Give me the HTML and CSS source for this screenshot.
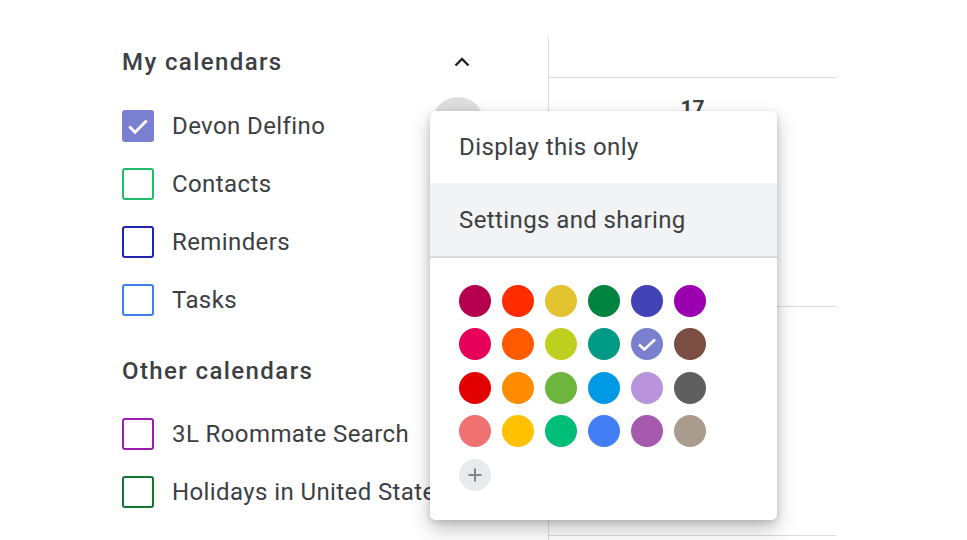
FILE: index.html
```html
<!DOCTYPE html>
<html lang="en">
<head>
<meta charset="utf-8">
<title>Calendar list</title>
<link rel="stylesheet" href="styles.css">
</head>
<body>
<div class="page">
  <aside class="sidebar">
    <section class="group">
      <div class="group-head">
        <h2 class="group-title">My calendars</h2>
        <svg class="chevron" width="24" height="24" viewBox="0 0 24 24"><path d="M5.5 15.5 L12 9 L18.5 15.5" fill="none" stroke="#202124" stroke-width="2.4"/></svg>
      </div>
      <ul class="cal-list">
        <li class="cal"><span class="box box-lavender"><svg width="26" height="26" viewBox="0 0 24 24"><path d="M4 12.5 L9.3 17.8 L20 7" fill="none" stroke="#fff" stroke-width="2.6"/></svg></span>Devon Delfino</li>
        <li class="cal"><span class="box box-sage"></span>Contacts</li>
        <li class="cal"><span class="box box-blueberry"></span>Reminders</li>
        <li class="cal"><span class="box box-cobalt"></span>Tasks</li>
      </ul>
    </section>
    <section class="group group-other">
      <div class="group-head">
        <h2 class="group-title">Other calendars</h2>
      </div>
      <ul class="cal-list cal-list-other">
        <li class="cal"><span class="box box-grape"></span>3L Roommate Search</li>
        <li class="cal"><span class="box box-basil"></span>Holidays in United States</li>
      </ul>
    </section>
  </aside>

  <main class="calendar">
    <div class="cal-top"></div>
    <div class="week"><div class="daynum">17</div></div>
    <div class="week"></div>
  </main>

  <div class="rest"></div>

  <div class="hover-dot"></div>

  <div class="menu">
    <div class="menu-item">Display this only</div>
    <div class="menu-item menu-item-hover">Settings and sharing</div>
    <div class="menu-divider"></div>
    <div class="swatches">
      <span class="swatch" style="--c:#b6004f"></span>
      <span class="swatch" style="--c:#ff2c00"></span>
      <span class="swatch" style="--c:#e3c430"></span>
      <span class="swatch" style="--c:#00843f"></span>
      <span class="swatch" style="--c:#4342b7"></span>
      <span class="swatch" style="--c:#9a00b0"></span>

      <span class="swatch" style="--c:#e7005b"></span>
      <span class="swatch" style="--c:#ff5a00"></span>
      <span class="swatch" style="--c:#bdd01f"></span>
      <span class="swatch" style="--c:#009a87"></span>
      <span class="swatch swatch-on" style="--c:#7a80cf"><svg width="24" height="24" viewBox="0 0 24 24"><path d="M4 12.5 L9.3 17.5 L20 7.5" fill="none" stroke="#fff" stroke-width="2.6"/></svg></span>
      <span class="swatch" style="--c:#7a4e42"></span>

      <span class="swatch" style="--c:#e30000"></span>
      <span class="swatch" style="--c:#ff8c00"></span>
      <span class="swatch" style="--c:#6db63d"></span>
      <span class="swatch" style="--c:#0099e5"></span>
      <span class="swatch" style="--c:#b994dd"></span>
      <span class="swatch" style="--c:#5f5f5f"></span>

      <span class="swatch" style="--c:#f07171"></span>
      <span class="swatch" style="--c:#ffc100"></span>
      <span class="swatch" style="--c:#00be78"></span>
      <span class="swatch" style="--c:#427ff5"></span>
      <span class="swatch" style="--c:#a55aad"></span>
      <span class="swatch" style="--c:#a99b8d"></span>

      <span class="swatch swatch-add"><svg width="18" height="18" viewBox="0 0 18 18"><path d="M9 2.5 V15.5 M2.5 9 H15.5" fill="none" stroke="#80868b" stroke-width="2"/></svg></span>
    </div>
  </div>
</div>
</body>
</html>
```

FILE: styles.css
```css
* { box-sizing: border-box; }

html, body {
  margin: 0;
  padding: 0;
  background: #ffffff;
}

body {
  width: 967px;
  height: 540px;
  overflow: hidden;
  font-family: Roboto, "Liberation Sans", Arial, sans-serif;
  color: #3c4043;
}

.page {
  position: relative;
  display: flex;
  width: 967px;
  height: 540px;
}

/* ---------- sidebar ---------- */
.sidebar {
  width: 548px;
  flex: none;
  padding: 33px 0 0 122px;
}

.group {
  width: 356px;
}

.group-head {
  height: 58px;
  display: flex;
  align-items: center;
  justify-content: space-between;
}

.group-title {
  margin: 0;
  font-size: 24px;
  font-weight: 500;
  letter-spacing: 1.4px;
  color: #3c4043;
}

.chevron {
  display: block;
  margin-right: 4px;
}

.cal-list {
  list-style: none;
  margin: 6px 0 0 0;
  padding: 0;
}

.cal-list-other {
  margin-top: 5px;
}

.group-other {
  margin-top: 13px;
}

.cal {
  height: 58px;
  display: flex;
  align-items: center;
  gap: 18px;
  font-size: 24px;
  letter-spacing: 0.4px;
  white-space: nowrap;
  color: #3c4043;
}

.box {
  width: 32px;
  height: 32px;
  flex: none;
  border-radius: 3px;
  border: 2.5px solid currentColor;
  display: flex;
  align-items: center;
  justify-content: center;
}

.box-lavender { color: #7a80cf; background: #7a80cf; }
.box-sage { color: #1fbd6b; }
.box-blueberry { color: #2124ad; }
.box-cobalt { color: #3d7ff5; }
.box-grape { color: #9a1eb0; }
.box-basil { color: #11792f; }

/* ---------- calendar grid ---------- */
.calendar {
  width: 288px;
  flex: none;
  margin-top: 37px;
  border-left: 1.5px solid #dadce0;
  display: flex;
  flex-direction: column;
}

.cal-top {
  height: 41px;
  border-bottom: 1.5px solid #dadce0;
}

.week {
  height: 229px;
  border-bottom: 1.5px solid #dadce0;
  display: flex;
  justify-content: center;
  padding-top: 18px;
}

.daynum {
  font-size: 21px;
  font-weight: 700;
  color: #3c4043;
  line-height: 24px;
  height: 24px;
}

.rest {
  flex: 1;
}

/* ---------- overlays ---------- */
.hover-dot {
  position: absolute;
  left: 432px;
  top: 97px;
  width: 52px;
  height: 52px;
  border-radius: 50%;
  background: #dedede;
}

.menu {
  position: absolute;
  left: 430px;
  top: 111px;
  width: 347px;
  height: 409px;
  background: #ffffff;
  border-radius: 5px;
  box-shadow: 0 9px 20px rgba(0, 0, 0, 0.24), 0 2px 6px rgba(0, 0, 0, 0.14), 0 0 1px rgba(0, 0, 0, 0.1);
  display: flex;
  flex-direction: column;
}

.menu-item {
  height: 72px;
  flex: none;
  display: flex;
  align-items: center;
  padding-left: 29px;
  font-size: 24px;
  letter-spacing: 0.4px;
  color: #3c4043;
}

.menu-item-hover {
  background: #f1f3f4;
  height: 73px;
}

.menu-divider {
  height: 1.5px;
  background: #dadce0;
  flex: none;
}

.swatches {
  display: grid;
  grid-template-columns: repeat(6, 32px);
  column-gap: 11px;
  row-gap: 11.6px;
  padding: 27px 0 0 29px;
}

.swatch {
  width: 32px;
  height: 32px;
  border-radius: 50%;
  background: var(--c);
  display: flex;
  align-items: center;
  justify-content: center;
}

.swatch-add {
  background: #e8eaed;
}
```
